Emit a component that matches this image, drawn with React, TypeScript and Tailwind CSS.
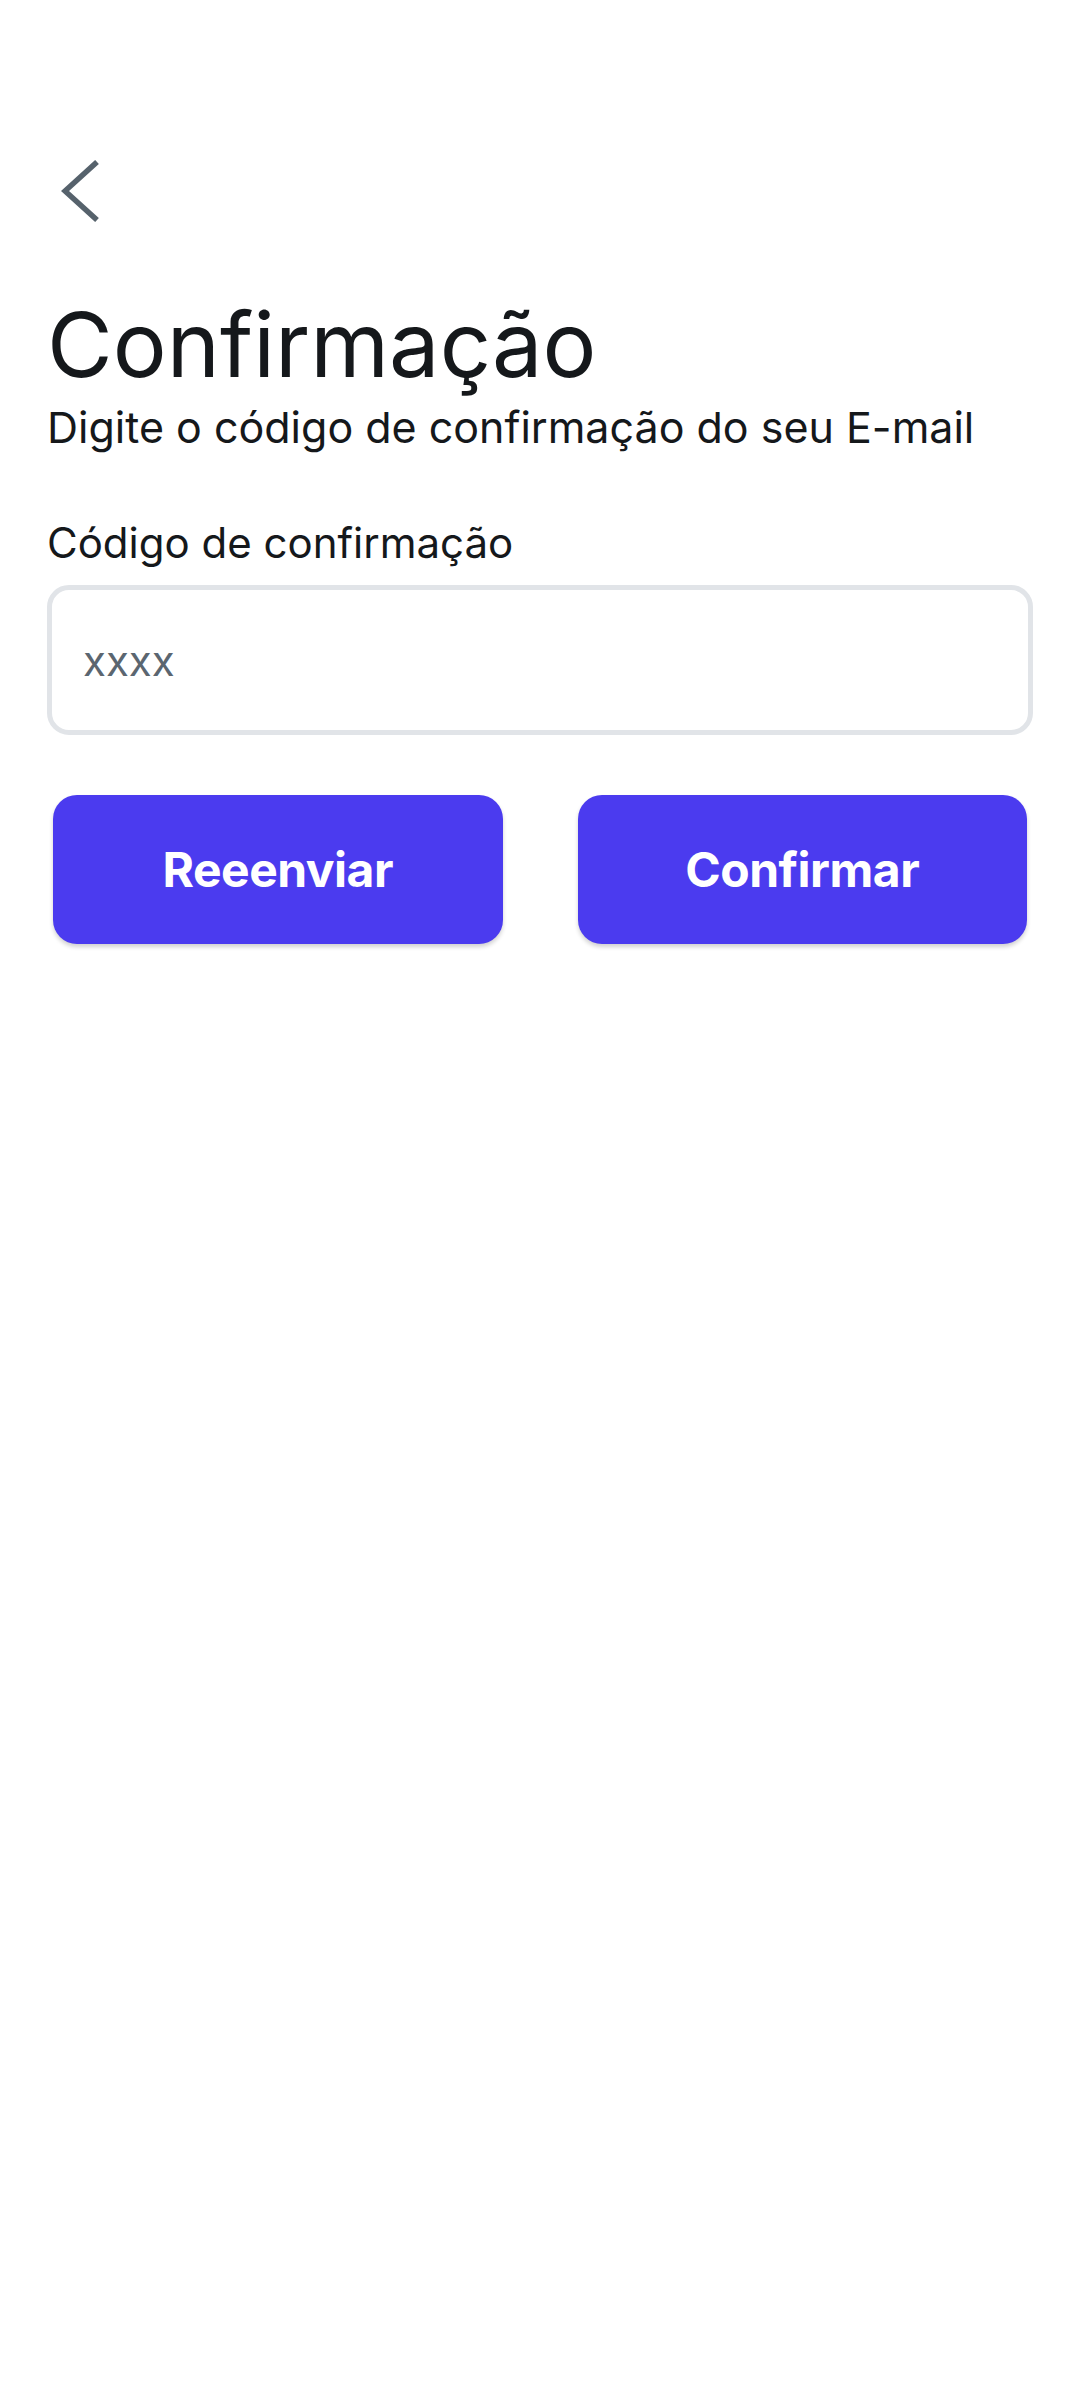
import { useState } from 'react';

export default function App() {
  const [code, setCode] = useState('');

  return (
    <div className="min-h-[2400px] bg-white font-['Inter','Noto_Sans',sans-serif] text-[#15181b]">
      <div className="px-[47px] pt-[160px]">
        <button type="button" className="ml-[14px] block" aria-label="Voltar">
          <svg width="40" height="62" viewBox="0 0 40 62" fill="none" className="block">
            <polyline points="36,2 4,31 36,60" stroke="#56626c" strokeWidth="5.5" strokeLinecap="butt" strokeLinejoin="miter" />
          </svg>
        </button>

        <h1 className="mt-[78px] text-[90px] font-normal leading-none">Confirmação</h1>
        <p className="mt-[16px] text-[43px] leading-none">Digite o código de confirmação do seu E-mail</p>

        <label className="mt-[73px] block text-[42px] leading-none" htmlFor="code">
          Código de confirmação
        </label>
        <input
          id="code"
          value={code}
          onChange={(e) => setCode(e.target.value)}
          placeholder="xxxx"
          className="mt-[21px] block h-[150px] w-full rounded-[22px] border-[5px] border-[#e1e4e8] pl-[31px] text-[42px] text-[#15181b] outline-none placeholder:text-[#5b6670]"
        />

        <div className="mx-[6px] mt-[60px] flex gap-[75px]">
          <button
            type="button"
            className="h-[149px] flex-1 rounded-[24px] bg-[#4b3bef] text-[48px] font-bold tracking-[-0.5px] text-white shadow-[0_3px_4px_rgba(0,0,0,0.18)]"
          >
            Reeenviar
          </button>
          <button
            type="button"
            className="h-[149px] flex-1 rounded-[24px] bg-[#4b3bef] text-[48px] font-bold tracking-[-0.5px] text-white shadow-[0_3px_4px_rgba(0,0,0,0.18)]"
          >
            Confirmar
          </button>
        </div>
      </div>
    </div>
  );
}
